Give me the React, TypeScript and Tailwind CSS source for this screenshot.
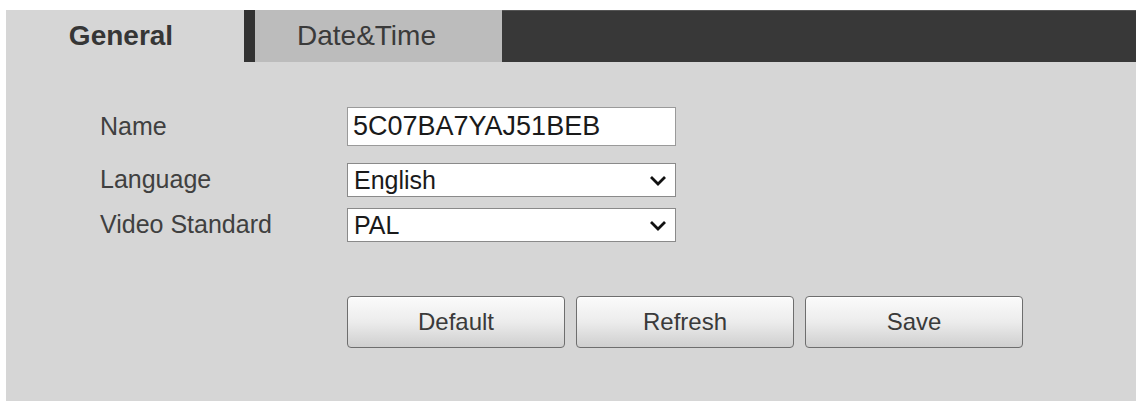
import React from "react";

function Chevron() {
  return (
    <svg width="18" height="13" viewBox="0 0 18 13" className="shrink-0">
      <path d="M2 3 L9 10 L16 3" fill="none" stroke="#111" strokeWidth="2.8" />
    </svg>
  );
}

function Select({ value }: { value: string }) {
  return (
    <div className="flex h-[34px] w-[329px] items-center justify-between border border-[#8a8a8a] bg-white pl-[6px] pr-[8px] text-[25px] leading-none text-[#1a1a1a]">
      <span>{value}</span>
      <Chevron />
    </div>
  );
}

function Btn({ label }: { label: string }) {
  return (
    <button className="flex h-[52px] w-[218px] items-center justify-center rounded-[4px] border border-[#6e6e6e] bg-gradient-to-b from-[#fbfbfb] via-[#ececec] to-[#cfcfcf] text-[24px] text-[#3a3a3a] shadow-[inset_0_1px_0_#ffffff]">
      {label}
    </button>
  );
}

export default function App() {
  return (
    <div
      className="h-[401px] w-[1140px] overflow-hidden bg-white pl-[6px] pr-[4px] pt-[10px]"
      style={{ fontFamily: '"Liberation Sans", Arial, sans-serif' }}
    >
      <div className="flex h-[391px] flex-col bg-[#d6d6d6]">
        <div className="flex h-[52px] shrink-0">
          <div className="flex w-[238px] items-center justify-center bg-[#d6d6d6] pr-[8px] text-[28px] font-bold text-[#363636]">
            General
          </div>
          <div className="w-[11px] bg-[#333333]" />
          <div className="flex w-[247px] items-center justify-center bg-[#bcbcbc] pr-[24px] text-[28px] text-[#3a3a3a]">
            Date&amp;Time
          </div>
          <div className="flex-1 border-t border-[#555] bg-[#383838]" />
        </div>
        <div className="flex flex-col pl-[94px] pt-[45px] text-[25px] text-[#404040]">
          <div className="flex h-[39px] items-center">
            <div className="w-[247px]">Name</div>
            <div className="flex h-[39px] w-[329px] items-center border border-[#9a9a9a] bg-white pl-[5px] text-[27px] text-[#1a1a1a]">
              5C07BA7YAJ51BEB
            </div>
          </div>
          <div className="mt-[17px] flex h-[34px] items-center">
            <div className="w-[247px]">Language</div>
            <Select value="English" />
          </div>
          <div className="mt-[11px] flex h-[34px] items-center">
            <div className="w-[247px]">Video Standard</div>
            <Select value="PAL" />
          </div>
          <div className="ml-[247px] mt-[54px] flex gap-[11px]">
            <Btn label="Default" />
            <Btn label="Refresh" />
            <Btn label="Save" />
          </div>
        </div>
      </div>
    </div>
  );
}
